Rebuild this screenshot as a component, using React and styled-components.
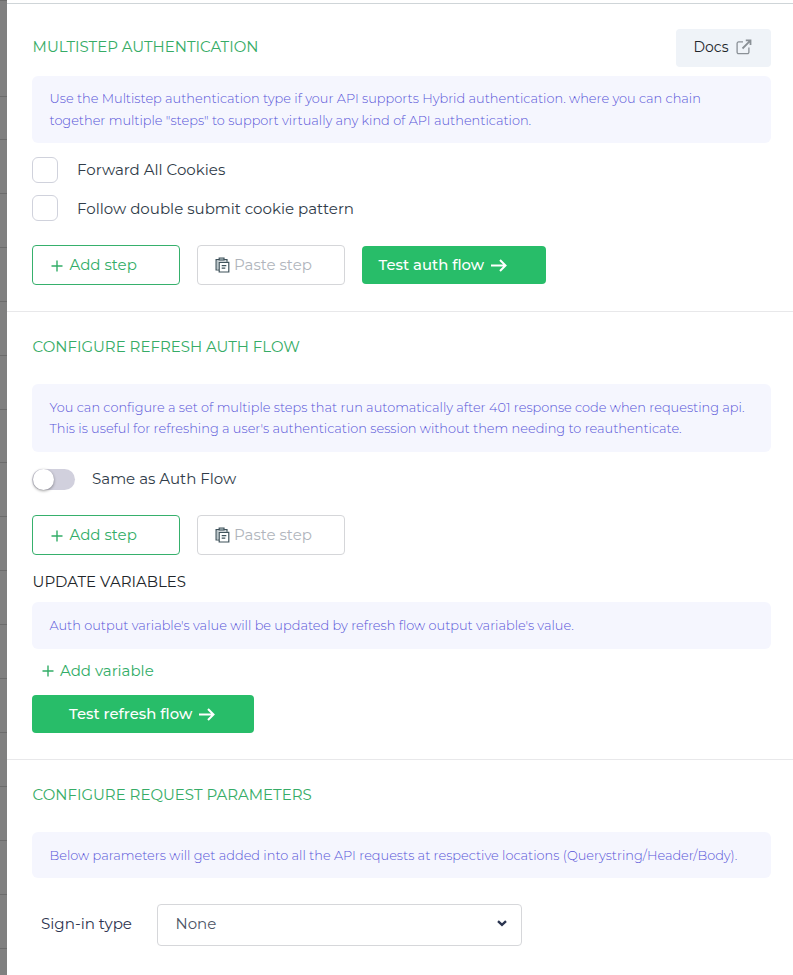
import React from "react";
import styled, { createGlobalStyle } from "styled-components";

const GlobalStyle = createGlobalStyle`
  * { box-sizing: border-box; }
  body { margin: 0; background: #fff; font-family: Montserrat, Inter, sans-serif; }
  button { font-family: inherit; cursor: pointer; }
  svg { display: block; flex: none; }
`;

const Page = styled.div`
  display: flex;
  height: 975px;
  overflow: hidden;
`;

const Backdrop = styled.div`
  flex: none;
  width: 7px;
  background: #808080;
`;

const BackdropRow = styled.div`
  height: ${(p) => p.$h}px;
  border-bottom: 1px solid #6c6c6c;
`;

const Panel = styled.main`
  flex: 1;
  min-width: 0;
  margin-top: 3px;
  border-top: 1px solid #cfd5d8;
`;

const Section = styled.section`
  display: flex;
  flex-direction: column;
  align-items: flex-start;
  height: ${(p) => p.$h}px;
  padding: 25px 22px 0 25px;
  border-bottom: ${(p) => (p.$last ? "none" : "1px solid #e8e8ea")};
`;

const HeaderRow = styled.header`
  display: flex;
  justify-content: space-between;
  align-items: center;
  align-self: stretch;
  height: 38px;
`;

const Text = styled.span`
  white-space: nowrap;
`;

const Heading = styled.h2`
  margin: 0;
  padding-left: 0.6px;
  padding-bottom: ${(p) => p.$pb || 0}px;
  font-size: 14.97px;
  line-height: 20px;
  font-weight: 400;
  color: ${(p) => (p.$dark ? "#212529" : "#36ac66")};
`;

const DocsButton = styled.button`
  display: flex;
  align-items: center;
  gap: 7.5px;
  width: 95px;
  height: 38px;
  padding: 0 0 2px 17.5px;
  border: 0;
  border-radius: 4px;
  background: #eff3f8;
  color: #212529;
  font-size: 14px;
`;

const Note = styled.div`
  display: flex;
  flex-direction: column;
  justify-content: center;
  align-self: stretch;
  height: ${(p) => p.$h}px;
  margin-top: ${(p) => p.$mt}px;
  padding: ${(p) => p.$pt || 0}px 0 0 17.5px;
  border-radius: 6px;
  background: #f5f6fe;
  color: #5855d8;
  font-size: 12.9px;
  font-weight: 300;
  line-height: ${(p) => p.$lh || 21}px;
`;

const CheckRow = styled.label`
  display: flex;
  align-items: center;
  gap: 19px;
  height: 26px;
  margin-top: ${(p) => p.$mt}px;
  color: #303c49;
  font-size: 15.05px;
`;

const CheckLabel = styled(Text)`
  padding-bottom: ${(p) => p.$pb || 0}px;
`;

const Checkbox = styled.span`
  width: 26px;
  height: 26px;
  border: 1px solid #d0d2dc;
  border-radius: 6px;
`;

const ToggleRow = styled(CheckRow)`
  gap: 17px;
  height: 21px;
`;

const Toggle = styled.span`
  display: flex;
  align-items: center;
  width: 43px;
  height: 21px;
  padding-left: 0.5px;
  border-radius: 11px;
  background: #d1d0dd;
`;

const Knob = styled.span`
  width: 21px;
  height: 21px;
  border-radius: 50%;
  background: #fff;
  box-shadow: 0 1px 3px rgba(0, 0, 0, 0.4);
`;

const ButtonRow = styled.div`
  display: flex;
  align-items: center;
  gap: 17px;
  margin-top: ${(p) => p.$mt}px;
`;

const OutlineButton = styled.button`
  display: flex;
  align-items: center;
  gap: ${(p) => (p.$muted ? 4 : 6.5)}px;
  width: 148px;
  height: 40px;
  padding: 0 0 1px ${(p) => (p.$muted ? 17 : 18)}px;
  border: 1px solid ${(p) => (p.$muted ? "#d5d6d9" : "#36b06c")};
  border-radius: 4px;
  background: #fff;
  color: ${(p) => (p.$muted ? "#b0b5bc" : "#32ad67")};
  font-size: 15px;
`;

const SolidButton = styled.button`
  display: flex;
  align-items: center;
  gap: 7px;
  width: ${(p) => p.$w}px;
  height: 38px;
  padding: 0 0 1px ${(p) => p.$pad}px;
  border: 0;
  border-radius: 4px;
  background: #28bd69;
  color: #fff;
  font-size: 14.85px;
  font-weight: 500;
`;

const LinkButton = styled.button`
  display: flex;
  align-items: center;
  gap: 6px;
  height: 20px;
  margin: 11px 0 15px 10px;
  padding: 0;
  border: 0;
  background: none;
  color: #32ad67;
  font-size: 15px;
`;

const Spacer = styled.div`
  height: ${(p) => p.$h}px;
`;

const FieldRow = styled.div`
  display: flex;
  align-items: center;
  margin-top: 26px;
  padding-left: 9px;
`;

const FieldLabel = styled.label`
  width: 116px;
  padding-bottom: 3px;
  color: #2d3450;
  font-size: 15.1px;
`;

const Select = styled.div`
  display: flex;
  align-items: center;
  justify-content: space-between;
  width: 365px;
  height: 42px;
  padding: 0 14px 3px 17.5px;
  border: 1px solid #d6d7da;
  border-radius: 4px;
  color: #4d5566;
  font-size: 15px;
`;

const PlusIcon = () => (
  <svg width="12" height="12" viewBox="0 0 12 12" stroke="currentColor" strokeWidth="1.4" transform="translate(0 1)">
    <path d="M6 .5v11M.5 6h11" />
  </svg>
);

const PasteIcon = () => (
  <svg width="15" height="16" viewBox="0 0 15 16" fill="none" stroke="#3f525b" strokeWidth="1.2">
    <path d="M4 13H1.1V2.6H12V4.8" />
    <path d="M2.2 3.5h1.2v8.5H2.2z" fill="#a9b8bd" stroke="none" />
    <path d="M4.2 1h4.8v2H4.2z" fill="#c3ced1" />
    <path d="M4.2 5.4h9.6v9.6H4.2z" fill="#fff" />
    <path d="M6.7 8.6h4.6M6.7 11.2h3.6" />
  </svg>
);

const ArrowIcon = () => (
  <svg width="16" height="14" viewBox="0 0 16 14" fill="none" stroke="currentColor" strokeWidth="2" transform="translate(0 1)">
    <path d="M0 6.5h14.5M9 1l5.5 5.5L9 12" />
  </svg>
);

const ExternalIcon = () => (
  <svg width="16" height="16" viewBox="0 0 16 16" fill="none" stroke="#8a9096" strokeWidth="1.3">
    <path d="M7 2.9H2.6A1.5 1.5 0 0 0 1.1 4.4v8.8a1.5 1.5 0 0 0 1.5 1.5h8.8a1.5 1.5 0 0 0 1.5-1.5V8.5" />
    <path d="M6.5 9.5l7.8-7.8M9.8 1.4h4.7v4.7" strokeWidth="1.8" />
  </svg>
);

const ChevronIcon = () => (
  <svg width="10" height="7" viewBox="0 0 10 7" fill="none" stroke="#2b3550" strokeWidth="2.4">
    <path d="M1 1.2l4 3.6 4-3.6" />
  </svg>
);

const StepButtons = () => (
  <>
    <OutlineButton><PlusIcon /><Text>Add step</Text></OutlineButton>
    <OutlineButton $muted><PasteIcon /><Text>Paste step</Text></OutlineButton>
  </>
);

const backdropRows = [1, 96, 43, 54, 54, 54, 54, 54, 53, ...Array(9).fill(54)];

export default function App() {
  return (
    <Page>
      <GlobalStyle />
      <Backdrop>
        {backdropRows.map((h, i) => <BackdropRow key={i} $h={h} />)}
      </Backdrop>
      <Panel>
        <Section $h={308}>
          <HeaderRow>
            <Heading $pb={2}><Text>MULTISTEP AUTHENTICATION</Text></Heading>
            <DocsButton><Text>Docs</Text><ExternalIcon /></DocsButton>
          </HeaderRow>
          <Note $h={67} $mt={9} $lh={22}>
            <Text>Use the Multistep authentication type if your API supports Hybrid authentication. where you can chain</Text>
            <Text>together multiple "steps" to support virtually any kind of API authentication.</Text>
          </Note>
          <CheckRow $mt={14}><Checkbox /><CheckLabel $pb={1}>Forward All Cookies</CheckLabel></CheckRow>
          <CheckRow $mt={12}><Checkbox /><CheckLabel>Follow double submit cookie pattern</CheckLabel></CheckRow>
          <ButtonRow $mt={24}>
            <StepButtons />
            <SolidButton $w={184} $pad={16.5}><Text>Test auth flow</Text><ArrowIcon /></SolidButton>
          </ButtonRow>
        </Section>

        <Section $h={448}>
          <Heading><Text>CONFIGURE REFRESH AUTH FLOW</Text></Heading>
          <Note $h={68} $mt={27}>
            <Text>You can configure a set of multiple steps that run automatically after 401 response code when requesting api.</Text>
            <Text>This is useful for refreshing a user's authentication session without them needing to reauthenticate.</Text>
          </Note>
          <ToggleRow $mt={17}><Toggle><Knob /></Toggle><CheckLabel $pb={2}>Same as Auth Flow</CheckLabel></ToggleRow>
          <ButtonRow $mt={25}><StepButtons /></ButtonRow>
          <Spacer $h={17} />
          <Heading $dark><Text>UPDATE VARIABLES</Text></Heading>
          <Note $h={47} $mt={10}>
            <Text>Auth output variable's value will be updated by refresh flow output variable's value.</Text>
          </Note>
          <LinkButton><PlusIcon /><Text>Add variable</Text></LinkButton>
          <SolidButton $w={222} $pad={37}><Text>Test refresh flow</Text><ArrowIcon /></SolidButton>
        </Section>

        <Section $h={215} $last>
          <Heading><Text>CONFIGURE REQUEST PARAMETERS</Text></Heading>
          <Note $h={46} $mt={27} $pt={1}>
            <Text>Below parameters will get added into all the API requests at respective locations (Querystring/Header/Body).</Text>
          </Note>
          <FieldRow>
            <FieldLabel><Text>Sign-in type</Text></FieldLabel>
            <Select><Text>None</Text><ChevronIcon /></Select>
          </FieldRow>
        </Section>
      </Panel>
    </Page>
  );
}
